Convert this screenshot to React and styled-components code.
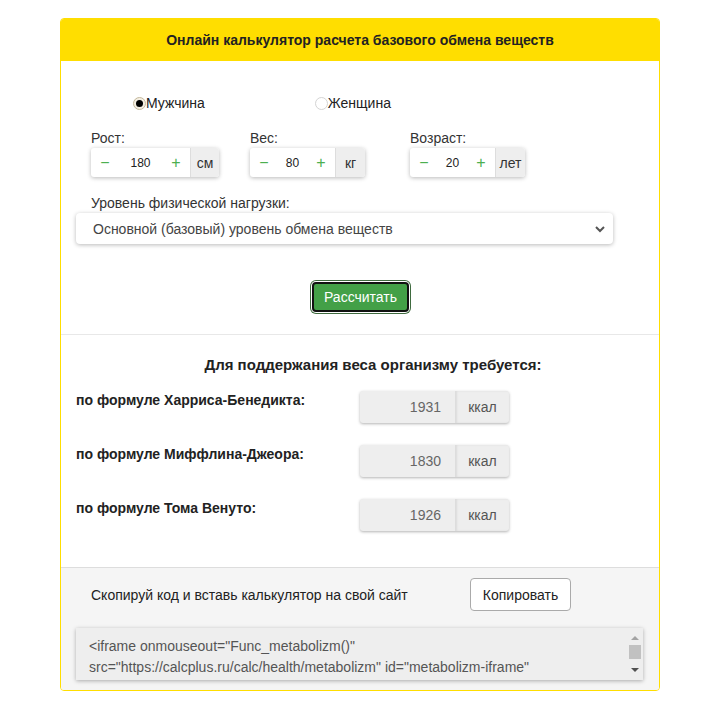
import React from "react";
import styled, { createGlobalStyle } from "styled-components";

const Global = createGlobalStyle`
  html, body { margin: 0; padding: 0; background: #fff; }
  body {
    font-family: "Liberation Sans", Arial, sans-serif;
    font-size: 14px;
    color: #222;
    padding: 18px 0 0 60px;
  }
  * { box-sizing: border-box; }
`;

const Card = styled.div`
  width: 600px;
  border: 1px solid #ffde00;
  border-radius: 4px;
  overflow: hidden;
  background: #fff;
`;

const Header = styled.div`
  height: 42px;
  background: #ffde00;
  display: flex;
  align-items: center;
  justify-content: center;
  font-weight: bold;
  font-size: 14px;
  color: #222;
`;

const FormSection = styled.div`
  padding: 34px 15px 21px 15px;
  border-bottom: 1px solid #e8e8e8;
`;

const RadioRow = styled.div`
  display: flex;
  padding-left: 57px;
  gap: 110px;
  line-height: 16px;
`;

const RadioLabel = styled.label`
  display: flex;
  align-items: center;
  color: #222;
`;

const RadioDot = styled.span`
  width: 13px;
  height: 13px;
  border-radius: 50%;
  border: 1px solid ${(p) => (p.$checked ? "#c4b89c" : "#d4d4d4")};
  background: ${(p) => (p.$checked ? "#f4efe3" : "#fff")};
  display: flex;
  align-items: center;
  justify-content: center;
  &::after {
    content: "";
    width: 7px;
    height: 7px;
    border-radius: 50%;
    background: ${(p) => (p.$checked ? "#000" : "transparent")};
  }
`;

const FieldRow = styled.div`
  display: grid;
  grid-template-columns: 159px 160px 1fr;
  padding-left: 15px;
  margin-top: 19px;
`;

const Field = styled.div`
  display: flex;
  flex-direction: column;
  align-items: flex-start;
`;

const Label = styled.div`
  line-height: 16px;
  color: #333;
  margin-bottom: 2px;
`;

const Stepper = styled.div`
  display: flex;
  height: 29px;
  border-radius: 3px;
  box-shadow: 0 1px 4px rgba(0, 0, 0, 0.28);
  overflow: hidden;
  background: #fff;
`;

const StepBtn = styled.span`
  width: 28px;
  display: flex;
  align-items: center;
  justify-content: center;
  color: #4caf50;
  font-size: 16px;
`;

const StepValue = styled.span`
  width: ${(p) => p.$w}px;
  display: flex;
  align-items: center;
  justify-content: center;
  font-size: 12px;
  color: #222;
`;

const Unit = styled.span`
  width: ${(p) => p.$w}px;
  display: flex;
  align-items: center;
  justify-content: center;
  background: #eee;
  border-left: 1px solid #ddd;
  color: #333;
  font-size: 14px;
`;

const ActivityLabel = styled(Label)`
  margin-top: 18px;
  padding-left: 15px;
`;

const Select = styled.div`
  width: 537px;
  height: 31px;
  border-radius: 4px;
  box-shadow: 0 1px 4px rgba(0, 0, 0, 0.28);
  display: flex;
  align-items: center;
  justify-content: space-between;
  padding: 0 7px 0 17px;
  color: #444;
  background: #fff;
`;

const ButtonRow = styled.div`
  display: flex;
  justify-content: center;
  margin-top: 37px;
  padding-left: 1px;
`;

const CalcButton = styled.button`
  width: 97px;
  height: 30px;
  margin: 1px;
  background: #43a047;
  color: #fff;
  border: 2px solid #111;
  border-radius: 4px;
  box-shadow: 0 0 0 1px #fff, 0 0 0 2px #3f6b3f;
  font-family: "Liberation Sans", Arial, sans-serif;
  font-size: 14px;
  padding: 0;
`;

const ResultSection = styled.div`
  padding: 22px 15px 36px 15px;
`;

const ResultTitle = styled.div`
  font-weight: bold;
  font-size: 15px;
  line-height: 16px;
  text-align: center;
  padding-left: 26px;
  color: #222;
`;

const ResultList = styled.div`
  display: flex;
  flex-direction: column;
  gap: 22px;
  margin-top: 18px;
`;

const ResultRow = styled.div`
  display: flex;
  align-items: flex-start;
`;

const ResultLabel = styled.div`
  width: 284px;
  font-weight: bold;
  line-height: 16px;
  padding-top: 1px;
  color: #222;
`;

const ResultBox = styled.div`
  display: flex;
  height: 32px;
  border-radius: 3px;
  background: #eee;
  box-shadow: 0 1px 3px rgba(0, 0, 0, 0.3);
  overflow: hidden;
`;

const ResultValue = styled.span`
  width: 95px;
  display: flex;
  align-items: center;
  justify-content: flex-end;
  padding-right: 14px;
  color: #666;
`;

const ResultUnit = styled.span`
  width: 54px;
  display: flex;
  align-items: center;
  justify-content: center;
  color: #555;
  border-left: 1px solid #ddd;
  box-shadow: inset 1px 0 2px rgba(0, 0, 0, 0.08);
`;

const Footer = styled.div`
  background: #f5f5f5;
  border-top: 1px solid #ddd;
  padding: 10px 15px 10px 15px;
`;

const CopyRow = styled.div`
  display: grid;
  grid-template-columns: 379px auto;
  align-items: center;
  padding-left: 15px;
`;

const CopyText = styled.span`
  color: #222;
`;

const CopyButton = styled.button`
  justify-self: start;
  width: 101px;
  height: 33px;
  background: #fff;
  border: 1px solid #aaa;
  border-radius: 4px;
  font-family: "Liberation Sans", Arial, sans-serif;
  font-size: 14px;
  color: #222;
  padding: 0;
`;

const CodeBox = styled.div`
  margin-top: 17px;
  width: 567px;
  height: 52px;
  background: #eee;
  box-shadow: 0 1px 4px rgba(0, 0, 0, 0.3);
  display: flex;
`;

const CodeText = styled.div`
  flex: 1;
  overflow: hidden;
  padding: 8px 10px 0 13px;
  line-height: 21px;
  color: #555;
  word-break: break-word;
`;

const ScrollBar = styled.div`
  width: 16px;
  display: flex;
  flex-direction: column;
  align-items: center;
  padding: 3px 0 3px;
`;

const Arrow = styled.span`
  width: 0;
  height: 0;
  border-left: 4px solid transparent;
  border-right: 4px solid transparent;
  ${(p) =>
    p.$up
      ? "border-bottom: 4px solid #a3a3a3;"
      : "border-top: 4px solid #505050;"}
  margin: 5px 0;
`;

const Thumb = styled.span`
  width: 12px;
  height: 14px;
  background: #c1c1c1;
`;

const Spacer = styled.span`
  flex: 1;
`;

const steppers = [
  { label: "Рост:", value: "180", unit: "см", vw: 43, uw: 29 },
  { label: "Вес:", value: "80", unit: "кг", vw: 29, uw: 30 },
  { label: "Возраст:", value: "20", unit: "лет", vw: 29, uw: 30 },
];

const results = [
  { label: "по формуле Харриса-Бенедикта:", value: "1931" },
  { label: "по формуле Миффлина-Джеора:", value: "1830" },
  { label: "по формуле Тома Венуто:", value: "1926" },
];

export default function App() {
  return (
    <>
      <Global />
      <Card>
        <Header>Онлайн калькулятор расчета базового обмена веществ</Header>
        <FormSection>
          <RadioRow>
            <RadioLabel>
              <RadioDot $checked />
              Мужчина
            </RadioLabel>
            <RadioLabel>
              <RadioDot />
              Женщина
            </RadioLabel>
          </RadioRow>
          <FieldRow>
            {steppers.map((s) => (
              <Field key={s.label}>
                <Label>{s.label}</Label>
                <Stepper>
                  <StepBtn>−</StepBtn>
                  <StepValue $w={s.vw}>{s.value}</StepValue>
                  <StepBtn>+</StepBtn>
                  <Unit $w={s.uw}>{s.unit}</Unit>
                </Stepper>
              </Field>
            ))}
          </FieldRow>
          <ActivityLabel>Уровень физической нагрузки:</ActivityLabel>
          <Select>
            <span>Основной (базовый) уровень обмена веществ</span>
            <svg width="12" height="8" viewBox="0 0 12 8">
              <path d="M2 2 L6 6 L10 2" fill="none" stroke="#555" strokeWidth="2" />
            </svg>
          </Select>
          <ButtonRow>
            <CalcButton>Рассчитать</CalcButton>
          </ButtonRow>
        </FormSection>
        <ResultSection>
          <ResultTitle>Для поддержания веса организму требуется:</ResultTitle>
          <ResultList>
            {results.map((r) => (
              <ResultRow key={r.label}>
                <ResultLabel>{r.label}</ResultLabel>
                <ResultBox>
                  <ResultValue>{r.value}</ResultValue>
                  <ResultUnit>ккал</ResultUnit>
                </ResultBox>
              </ResultRow>
            ))}
          </ResultList>
        </ResultSection>
        <Footer>
          <CopyRow>
            <CopyText>Скопируй код и вставь калькулятор на свой сайт</CopyText>
            <CopyButton>Копировать</CopyButton>
          </CopyRow>
          <CodeBox>
            <CodeText>
              &lt;iframe onmouseout="Func_metabolizm()"
              src="https://calcplus.ru/calc/health/metabolizm"
              id="metabolizm-iframe" style="width:600px; height:1300px;
              border:none;" scrolling="no"&gt;&lt;/iframe&gt;
            </CodeText>
            <ScrollBar>
              <Arrow $up />
              <Thumb />
              <Spacer />
              <Arrow />
            </ScrollBar>
          </CodeBox>
        </Footer>
      </Card>
    </>
  );
}
